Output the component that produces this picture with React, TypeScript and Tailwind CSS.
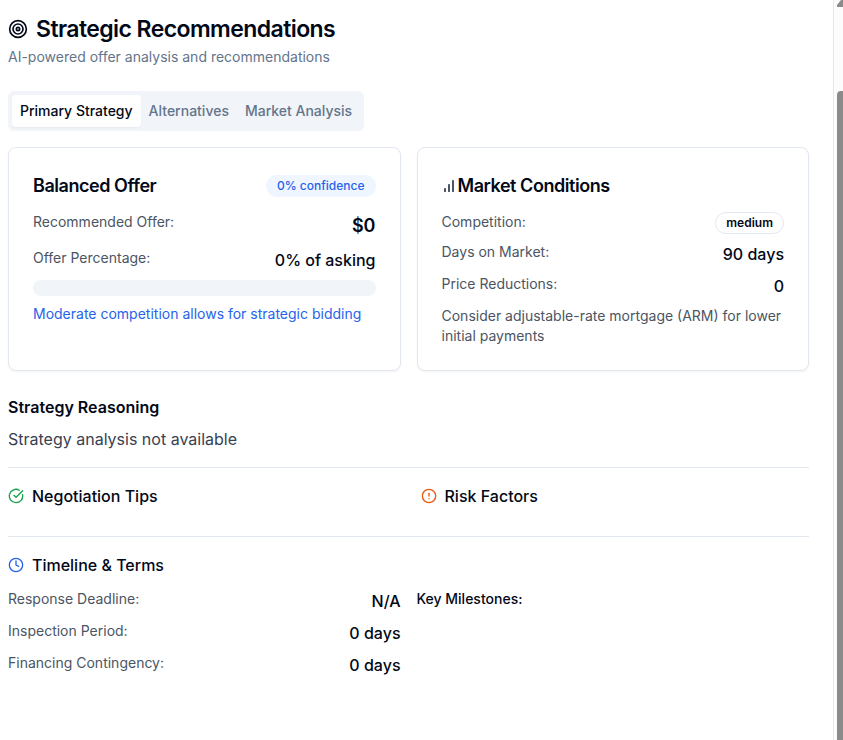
import type { ReactNode } from "react";
import { CircleAlert, CircleCheckBig, Clock, Target } from "lucide-react";

const tabs = ["Primary Strategy", "Alternatives", "Market Analysis"];

function BarsIcon({ className }: { className?: string }) {
  return (
    <svg viewBox="0 0 16 16" className={className} fill="currentColor" aria-hidden="true">
      <rect x="2" y="10" width="2" height="4" rx="0.4" />
      <rect x="6" y="6" width="2" height="8" rx="0.4" />
      <rect x="10" y="2" width="2" height="12" rx="0.4" />
    </svg>
  );
}

function Row({ label, children }: { label: string; children: ReactNode }) {
  return (
    <div className="flex items-start justify-between">
      <dt className="text-sm text-[#4b5563]">{label}</dt>
      <dd className="font-medium">{children}</dd>
    </div>
  );
}

function Card({ children }: { children: ReactNode }) {
  return (
    <section className="rounded-lg border border-[#e2e8f0] bg-white p-6 shadow-xs">
      {children}
    </section>
  );
}

export default function App() {
  return (
    <div className="flex h-screen overflow-hidden bg-white font-['Inter',sans-serif] text-[#020817]">
      <main className="min-w-0 flex-1 pt-[17px] pr-6 pl-2">
        <header className="flex flex-col gap-1.5">
          <h1 className="flex items-center gap-2 text-[23px] leading-6 font-semibold tracking-tight">
            <Target className="size-5" />
            Strategic Recommendations
          </h1>
          <p className="text-sm text-[#64748b]">AI-powered offer analysis and recommendations</p>
        </header>

        <div
          role="tablist"
          className="mt-6 inline-flex h-10 items-center rounded-md bg-[#f1f5f9] p-1 align-top"
        >
          {tabs.map((tab, i) => (
            <button
              key={tab}
              role="tab"
              type="button"
              aria-selected={i === 0}
              className={
                i === 0
                  ? "rounded-sm bg-white px-2 py-1.5 text-sm font-medium shadow-xs"
                  : "rounded-sm px-2 py-1.5 text-sm font-medium text-[#64748b]"
              }
            >
              {tab}
            </button>
          ))}
        </div>

        <div className="mt-4 grid grid-cols-2 gap-4">
          <Card>
            <div className="mb-3 flex items-center justify-between">
              <h2 className="text-lg font-semibold tracking-tight">Balanced Offer</h2>
              <span className="rounded-full border border-transparent bg-[#eff6ff] px-2.5 py-0.5 text-xs font-medium text-[#2563eb]">
                0% confidence
              </span>
            </div>
            <div className="space-y-2">
              <dl className="space-y-2">
                <Row label="Recommended Offer:">
                  <span className="block text-lg font-semibold">$0</span>
                </Row>
                <Row label="Offer Percentage:">0% of asking</Row>
              </dl>
              <div
                role="progressbar"
                aria-label="Offer percentage"
                aria-valuenow={0}
                className="h-4 rounded-full bg-[#f1f5f9]"
              />
              <p className="text-sm text-[#2563eb]">
                Moderate competition allows for strategic bidding
              </p>
            </div>
          </Card>

          <Card>
            <h2 className="mb-3 flex items-center text-lg font-semibold tracking-tight">
              <BarsIcon className="size-4 text-[#4b5563]" />
              Market Conditions
            </h2>
            <div className="space-y-2">
              <dl className="space-y-2">
                <Row label="Competition:">
                  <span className="block rounded-full border border-[#e2e8f0] px-2.5 py-0.5 text-xs font-semibold">
                    medium
                  </span>
                </Row>
                <Row label="Days on Market:">90 days</Row>
                <Row label="Price Reductions:">0</Row>
              </dl>
              <p className="text-sm text-[#4b5563]">
                Consider adjustable-rate mortgage (ARM) for lower initial payments
              </p>
            </div>
          </Card>
        </div>

        <section className="mt-6">
          <h2 className="font-semibold">Strategy Reasoning</h2>
          <p className="mt-2 text-[#374151]">Strategy analysis not available</p>
        </section>

        <hr className="mt-4 border-[#e2e8f0]" />

        <div className="mt-4 grid grid-cols-2 gap-6">
          <h2 className="flex items-center gap-2 font-medium">
            <CircleCheckBig className="size-4 text-[#16a34a]" />
            Negotiation Tips
          </h2>
          <h2 className="flex items-center gap-2 font-medium">
            <CircleAlert className="size-4 text-[#ea580c]" />
            Risk Factors
          </h2>
        </div>

        <hr className="mt-7 border-[#e2e8f0]" />

        <section className="mt-4">
          <h2 className="flex items-center gap-2 font-medium">
            <Clock className="size-4 text-[#2563eb]" />
            Timeline &amp; Terms
          </h2>
          <div className="mt-3 grid grid-cols-2 gap-4">
            <dl className="space-y-2">
              <Row label="Response Deadline:">N/A</Row>
              <Row label="Inspection Period:">0 days</Row>
              <Row label="Financing Contingency:">0 days</Row>
            </dl>
            <h3 className="text-sm font-medium">Key Milestones:</h3>
          </div>
        </section>
      </main>

      <div className="flex w-[10px] flex-col border-l border-[#e2e8f0] bg-[#fcfcfc] pl-[3px]">
        <svg viewBox="0 0 6 7" className="h-[7px] w-[6px]" aria-hidden="true">
          <path d="M0 7V5L4 0h2v7z" fill="#8b8b8b" />
        </svg>
        <div className="mt-[84px] flex-1 rounded-tl-sm bg-[#8b8b8b]" />
      </div>
    </div>
  );
}
